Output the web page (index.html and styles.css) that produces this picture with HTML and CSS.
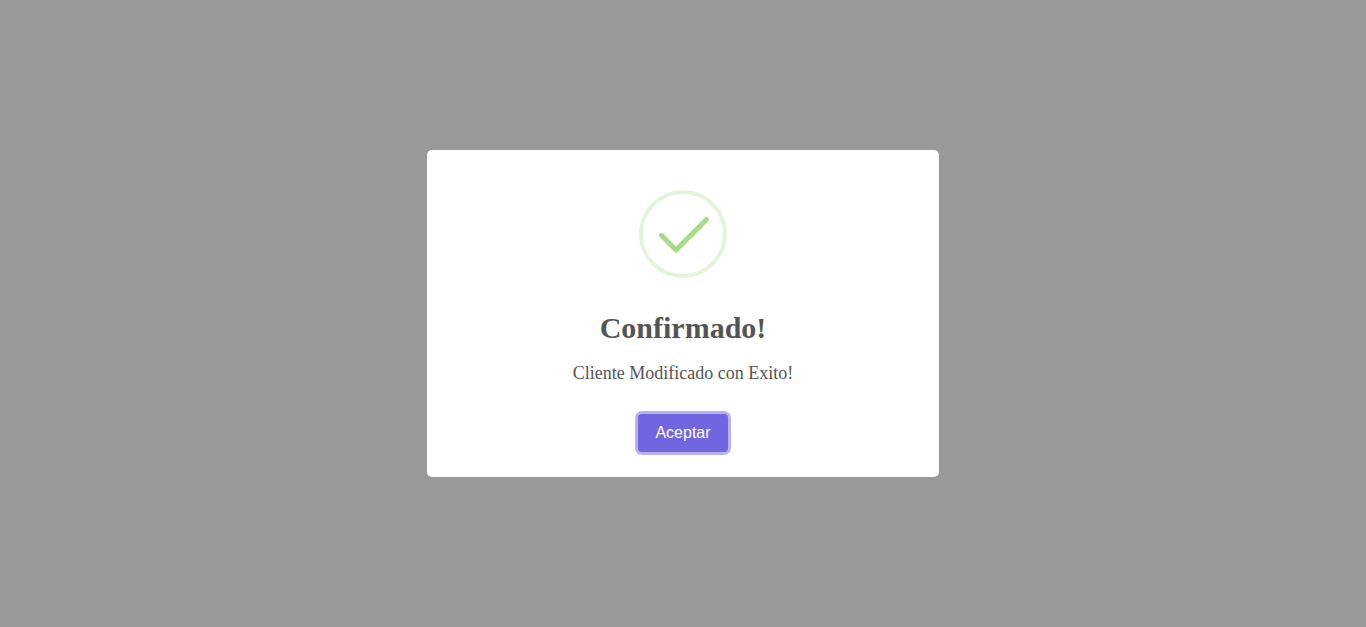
FILE: index.html
```html
<!DOCTYPE html>
<html lang="es">
<head>
<meta charset="utf-8">
<meta name="viewport" content="width=device-width, initial-scale=1">
<title>Confirmado</title>
<link rel="stylesheet" href="styles.css">
</head>
<body>
<div class="backdrop">
  <div class="dialog" role="dialog" aria-modal="true" aria-labelledby="dialog-title" aria-describedby="dialog-text">
    <svg class="dialog-icon" viewBox="0 0 88 88" aria-hidden="true">
      <circle class="icon-ring" cx="44" cy="44" r="42"/>
      <path class="icon-check" d="M22.3 45.3 L37 60 L67.5 29.5"/>
    </svg>
    <h2 class="dialog-title" id="dialog-title">Confirmado!</h2>
    <p class="dialog-text" id="dialog-text">Cliente Modificado con Exito!</p>
    <div class="dialog-actions">
      <button class="confirm-button" type="button">Aceptar</button>
    </div>
  </div>
</div>
</body>
</html>
```
FILE: styles.css
```css
* {
  box-sizing: border-box;
}

body {
  margin: 0;
  background: #fff;
  font-family: "Liberation Serif", "Times New Roman", serif;
}

.backdrop {
  display: flex;
  align-items: center;
  justify-content: center;
  min-height: 100vh;
  padding: 10px;
  background: rgba(0, 0, 0, 0.4);
}

.dialog {
  display: flex;
  flex-direction: column;
  align-items: center;
  width: 512px;
  max-width: 100%;
  padding-bottom: 20px;
  border-radius: 5px;
  background: #fff;
  color: #545454;
  text-align: center;
}

.dialog-icon {
  width: 88px;
  height: 88px;
  margin: 40px 0 10px;
  fill: none;
}

.icon-ring {
  stroke: rgba(165, 220, 134, 0.3);
  stroke-width: 4;
}

.icon-check {
  stroke: #a5dc86;
  stroke-width: 5;
  stroke-linecap: round;
  stroke-linejoin: round;
}

.dialog-title {
  margin: 0;
  padding: 23px 16px 0;
  font-size: 30px;
  line-height: 34px;
}

.dialog-text {
  margin: 0;
  padding: 18px 28px 6px;
  font-size: 18px;
  line-height: 20px;
}

.dialog-actions {
  display: flex;
  justify-content: center;
  margin-top: 20px;
}

.confirm-button {
  margin: 5px;
  padding: 10px 17px;
  border: 0;
  border-radius: 4px;
  background: #7066e0;
  box-shadow: 0 0 0 3px rgba(112, 102, 224, 0.5);
  color: #fff;
  font-family: "Liberation Sans", Arial, sans-serif;
  font-size: 16px;
  line-height: 18px;
}
```
